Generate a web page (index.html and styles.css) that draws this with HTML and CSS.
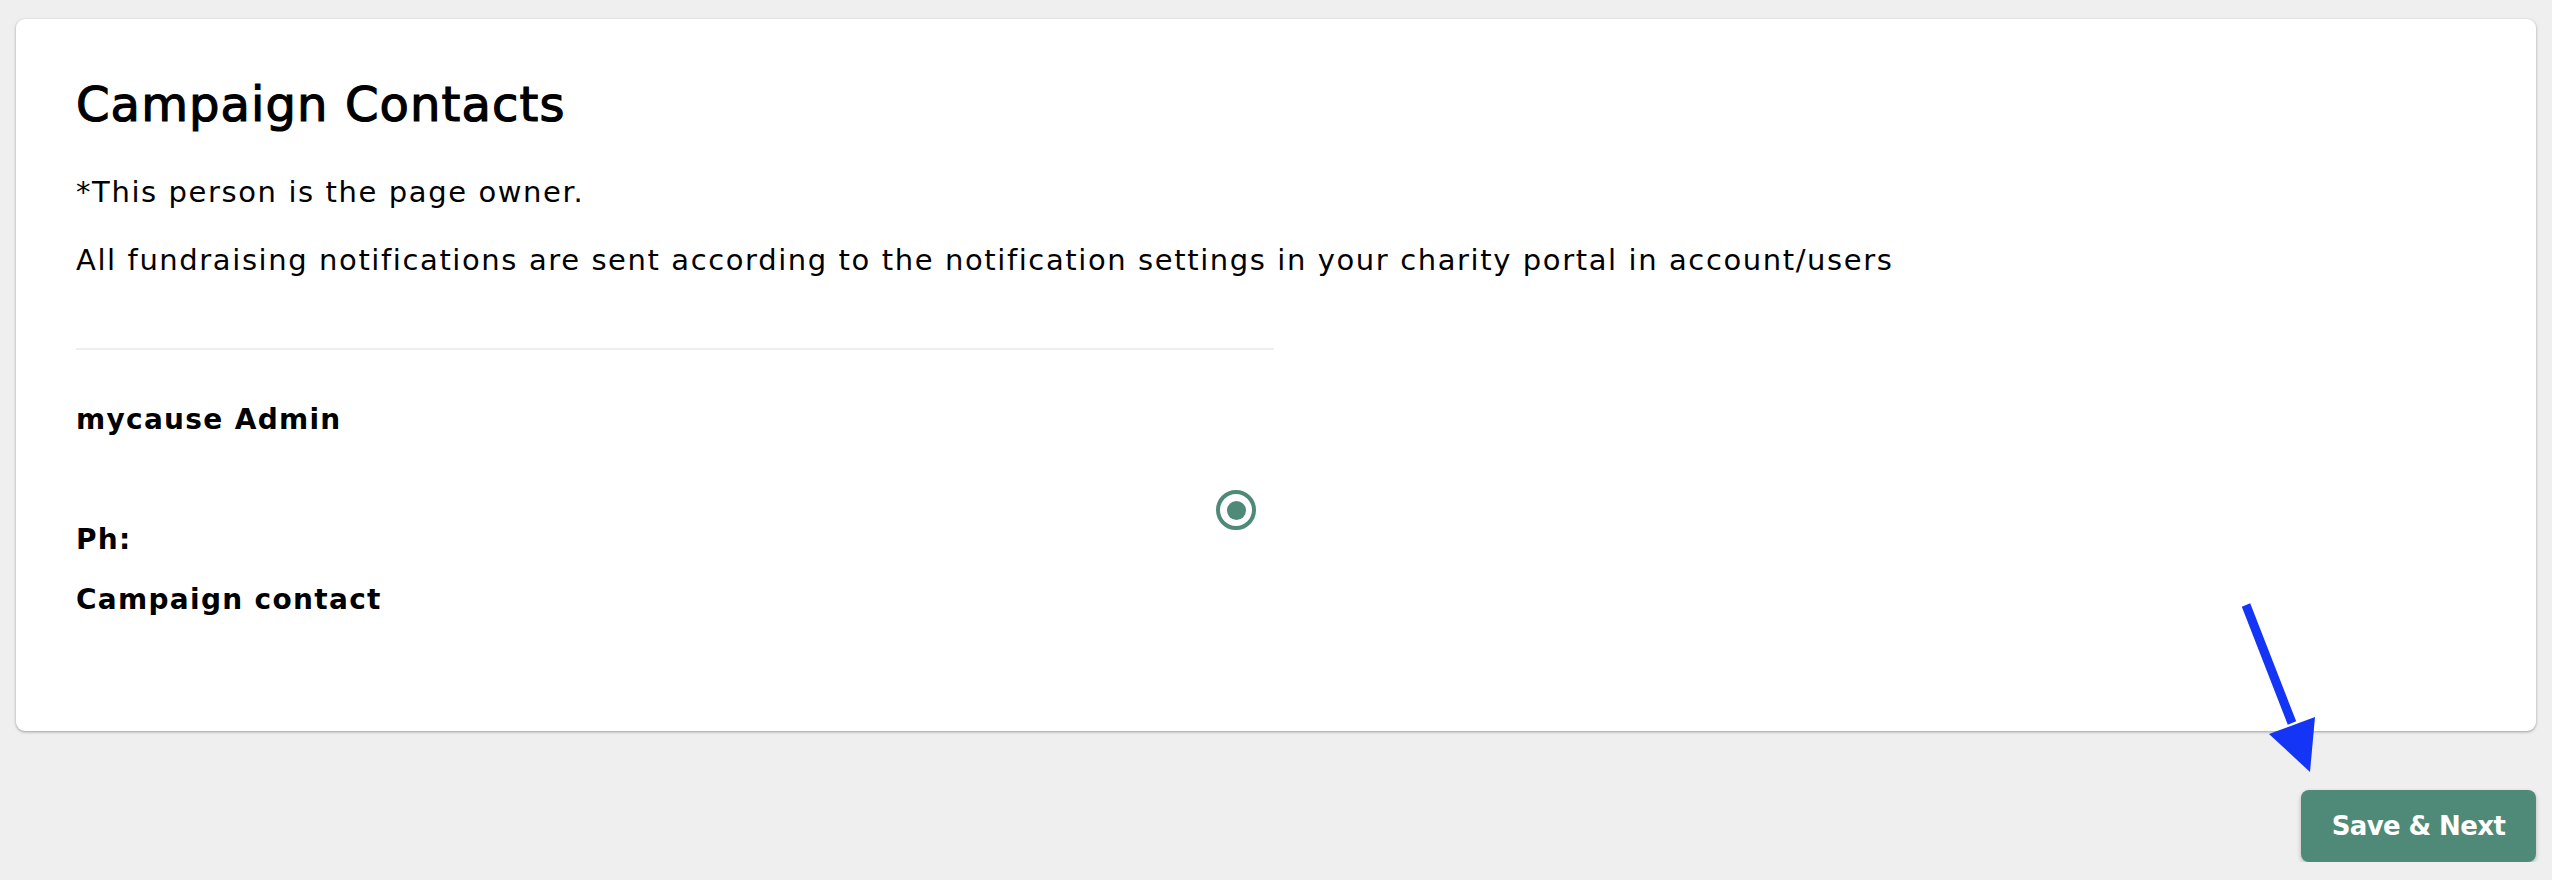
FILE: index.html
```html
<!DOCTYPE html>
<html lang="en">
<head>
  <meta charset="UTF-8">
  <title>Campaign Contacts</title>
  <link rel="stylesheet" href="styles.css">
</head>
<body>
  <div class="page">
    <div class="card">
      <h2>Campaign Contacts</h2>
      <p>*This person is the page owner.</p>
      <p>All fundraising notifications are sent according to the notification settings in your charity portal in account/users</p>
      <div class="contact">
        <div class="contact-info">
          <div class="line">mycause Admin</div>
          <div class="line"></div>
          <div class="line">Ph:</div>
          <div class="line">Campaign contact</div>
        </div>
        <span class="radio checked"></span>
      </div>
    </div>
    <div class="actions">
      <button>Save &amp; Next</button>
    </div>
    <svg class="pointer" width="110" height="190" viewBox="0 0 110 190">
      <line x1="16" y1="10" x2="62" y2="128" stroke="#1434f6" stroke-width="9"/>
      <polygon points="39,139 85,122 80,177" fill="#1434f6"/>
    </svg>
  </div>
</body>
</html>
```

FILE: styles.css
```css
body {
  margin: 0;
  background: #efefef;
  font-family: 'DejaVu Sans', sans-serif;
  color: #000;
}
.page {
  position: relative;
  padding: 19px 16px 0;
}
.card {
  background: #fff;
  border-radius: 9px;
  box-shadow: 0 1px 3px rgba(0,0,0,0.35);
  padding: 56px 60px 110px;
}
h2 {
  margin: 0 0 38px;
  font-size: 48px;
  line-height: 58px;
  font-weight: normal;
  letter-spacing: 1.1px;
  -webkit-text-stroke: 1.2px #000;
}
p {
  margin: 0 0 26px;
  font-size: 29px;
  line-height: 42px;
  letter-spacing: 1.6px;
}
.contact {
  width: 1198px;
  margin-top: 67px;
  border-top: 2px solid #eeeeee;
  padding-top: 49px;
  display: flex;
  align-items: center;
  justify-content: space-between;
}
.line {
  font-size: 28px;
  font-weight: bold;
  line-height: 42px;
  height: 42px;
  margin-bottom: 18px;
  letter-spacing: 1.3px;
}
.line:last-child { margin-bottom: 0; }
.radio {
  width: 32px;
  height: 32px;
  border: 4px solid #4e8a77;
  border-radius: 50%;
  margin-right: 18px;
  display: flex;
  align-items: center;
  justify-content: center;
}
.radio.checked::after {
  content: "";
  width: 19px;
  height: 19px;
  border-radius: 50%;
  background: #4e8a77;
}
.actions {
  display: flex;
  justify-content: flex-end;
  padding-top: 59px;
}
button {
  width: 235px;
  height: 72px;
  background: #4e8a77;
  color: #fff;
  border: none;
  border-radius: 8px;
  font-family: 'DejaVu Sans', sans-serif;
  font-size: 26px;
  font-weight: bold;
  letter-spacing: -0.6px;
  box-shadow: 0 2px 4px rgba(0,0,0,0.25);
  cursor: pointer;
}
.pointer {
  position: absolute;
  left: 2230px;
  top: 595px;
}
```
